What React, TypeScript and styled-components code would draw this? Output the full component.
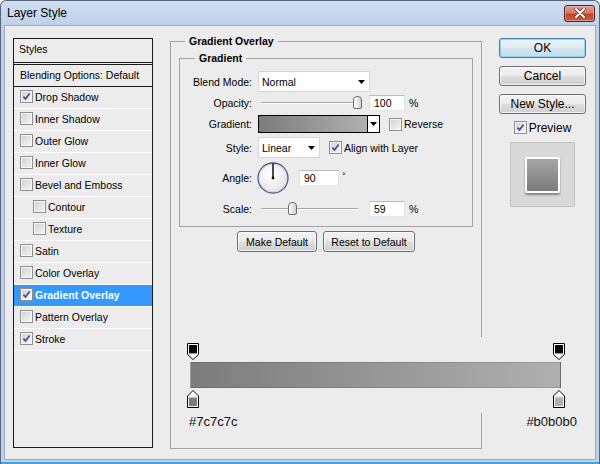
import React from "react";
import styled, { createGlobalStyle } from "styled-components";

const SANS = `"Liberation Sans", Arial, sans-serif`;

const Global = createGlobalStyle`
  html, body { margin: 0; padding: 0; }
  body {
    width: 600px; height: 464px; overflow: hidden; background: #fff;
    font-family: ${SANS}; font-size: 10.5px; color: #000;
  }
  *, *::before, *::after { box-sizing: border-box; }
`;

const Window = styled.div`
  width: 600px;
  height: 464px;
  display: flex;
  flex-direction: column;
  border: 1px solid #56657a;
  border-bottom: none;
  border-radius: 6px 6px 0 0;
  background: linear-gradient(180deg, #cfdef0 0px, #bdd2ea 24px, #bcd1e9 100%);
  padding: 0 3px 4px;
  box-shadow: inset 0 -2px 0 #3fa6dd;
  overflow: hidden;
`;

const TitleBar = styled.div`
  height: 24px;
  flex: none;
  display: flex;
  align-items: center;
  justify-content: space-between;
  padding: 0 1px 0 3px;
`;

const Title = styled.span`
  font-size: 12px;
  color: #000;
`;

const CloseButton = styled.div`
  width: 31px;
  height: 17px;
  border: 1px solid #5c2219;
  border-radius: 3px;
  background: linear-gradient(180deg, #e09a8c 0%, #d47a68 45%, #c0442c 55%, #c65f45 100%);
  box-shadow: inset 0 0 0 1px rgba(255, 210, 200, 0.45);
  display: flex;
  align-items: center;
  justify-content: center;
`;

const Body = styled.div`
  flex: 1;
  display: flex;
  align-items: flex-start;
  background: #ececec;
  border: 1px solid #98abc3;
  padding: 12px 8px 0 8px;
`;

/* ---------- left styles list ---------- */

const StylesPanel = styled.div`
  width: 140px;
  height: 410px;
  flex: none;
  border: 1px solid #1b1b1b;
  overflow: hidden;
`;

const HeaderRow = styled.div`
  height: 24px;
  border-bottom: 1px solid #1b1b1b;
  display: flex;
  align-items: center;
  padding: 0 0 3px 5px;
`;

const BlendingRow = styled.div`
  height: 23px;
  margin-top: 1px;
  border-top: 1px solid #1b1b1b;
  border-bottom: 1px solid #1b1b1b;
  display: flex;
  align-items: center;
  padding: 0 0 2px 6px;
`;

const StyleRow = styled.div<{ $indent?: boolean; $selected?: boolean }>`
  height: 22px;
  border-bottom: 1px solid #ffffff;
  display: flex;
  align-items: center;
  gap: 2px;
  padding: 0 0 2px ${(p) => (p.$indent ? 19 : 6)}px;
  background: ${(p) => (p.$selected ? "#3399ff" : "transparent")};
  color: ${(p) => (p.$selected ? "#fff" : "#000")};
  font-weight: ${(p) => (p.$selected ? "bold" : "normal")};
`;

const Box = styled.span`
  width: 13px;
  height: 13px;
  flex: none;
  border: 1px solid #8e8f8f;
  background: linear-gradient(135deg, #cfcfcf 0%, #f3f3f3 90%);
  box-shadow: inset 0 0 0 1px #f6f6f6;
  display: flex;
  align-items: center;
  justify-content: center;
`;

const CheckBox = ({ checked }: { checked?: boolean }) => (
  <Box>
    {checked && (
      <svg width="11" height="11" viewBox="0 0 11 11">
        <path d="M2.4 5.6 L4.5 8 L8.6 2.6" fill="none" stroke="#3a4f9e" strokeWidth="1.7" />
      </svg>
    )}
  </Box>
);

/* ---------- groups ---------- */

const MainGroup = styled.fieldset`
  margin: -3px 0 0 17px;
  width: 312px;
  min-inline-size: 0;
  flex: none;
  padding: 5px 8px 19px;
  border: 1px solid #a4a4a4;
`;

const InnerGroup = styled.fieldset`
  margin: 0;
  width: 294px;
  min-inline-size: 0;
  padding: 7px 0 8px;
  border: 1px solid #a4a4a4;
`;

const Legend = styled.legend<{ $offset: number }>`
  margin-left: ${(p) => p.$offset}px;
  padding: 0 4px;
  font-weight: bold;
  line-height: 12px;
  font-size: 10.5px;
`;

const FormRow = styled.div<{ $top: number; $h: number }>`
  display: flex;
  align-items: center;
  height: ${(p) => p.$h}px;
  margin-top: ${(p) => p.$top}px;
`;

const FieldLabel = styled.span`
  width: 72px;
  flex: none;
  text-align: right;
  margin-right: 6px;
`;

const Select = styled.div<{ $w: number }>`
  width: ${(p) => p.$w}px;
  height: 21px;
  flex: none;
  background: #fff;
  border: 1px solid #d6d6d6;
  display: flex;
  align-items: center;
  justify-content: space-between;
  padding: 0 4px 0 3px;
`;

const Arrow = () => (
  <svg width="7" height="4" viewBox="0 0 7 4">
    <path d="M0 0 H7 L3.5 4 Z" fill="#000" />
  </svg>
);

const NumBox = styled.div<{ $w: number }>`
  width: ${(p) => p.$w}px;
  height: 16px;
  flex: none;
  background: #fff;
  border: 1px solid;
  border-color: #b9bcc2 #dfe1e6 #e6eaee #dfe1e6;
  padding-left: 4px;
  line-height: 14px;
`;

const Unit = styled.span<{ $gap: number; $raise?: boolean }>`
  margin-left: ${(p) => p.$gap}px;
  align-self: ${(p) => (p.$raise ? "flex-start" : "center")};
  margin-top: ${(p) => (p.$raise ? 9 : 0)}px;
  font-size: ${(p) => (p.$raise ? 9 : 10.5)}px;
`;

const Slider = styled.div`
  width: 111px;
  height: 14px;
  flex: none;
  display: flex;
  align-items: center;
  padding-left: 3px;
`;

const Groove = styled.div`
  position: relative;
  width: 97px;
  height: 2px;
  border-top: 1px solid #a6a6a6;
  background: #ffffff;
`;

const Thumb = styled.div<{ $pos: number }>`
  position: absolute;
  left: calc(${(p) => p.$pos * 100}% - 5px);
  top: -7px;
  width: 9px;
  height: 13px;
  border: 1px solid #6f6f6f;
  border-radius: 4px 4px 2px 2px;
  background: linear-gradient(90deg, #fdfdfd 0%, #e4e4e4 60%, #cfcfcf 100%);
`;

const Swatch = styled.div`
  width: 122px;
  height: 18px;
  flex: none;
  border: 1px solid #000;
  display: flex;
`;

const SwatchFill = styled.div`
  flex: 1;
  background: linear-gradient(90deg, #7c7c7c, #b0b0b0);
`;

const SwatchDrop = styled.div`
  width: 12px;
  border-left: 1px solid #000;
  background: #fff;
  display: flex;
  align-items: center;
  justify-content: center;
`;

const InlineCheck = styled.label<{ $gap: number }>`
  display: flex;
  align-items: center;
  gap: 2px;
  margin-left: ${(p) => p.$gap}px;
`;

const DialWrap = styled.div`
  width: 32px;
  height: 32px;
  flex: none;
  margin-left: -1px;
  margin-right: 10px;
`;

const Dial = () => (
  <DialWrap>
    <svg width="32" height="32" viewBox="0 0 32 32">
      <defs>
        <radialGradient id="dialg" cx="0.4" cy="0.35" r="0.75">
          <stop offset="0" stopColor="#ffffff" />
          <stop offset="1" stopColor="#e2e2e2" />
        </radialGradient>
      </defs>
      <circle cx="16" cy="16" r="15" fill="url(#dialg)" stroke="#4a5a7e" strokeWidth="1.3" />
      <circle cx="16" cy="16" r="13.8" fill="none" stroke="#c9d0dd" strokeWidth="0.8" />
      <line x1="16" y1="16" x2="16" y2="1.2" stroke="#000" strokeWidth="1.4" />
      <rect x="14.8" y="14.8" width="2.4" height="2.4" fill="#000" />
    </svg>
  </DialWrap>
);

const ButtonRow = styled.div`
  display: flex;
  justify-content: center;
  gap: 6px;
  margin-top: 4px;
`;

const PushButton = styled.div<{ $w: number }>`
  width: ${(p) => p.$w}px;
  height: 21px;
  border: 1px solid #707070;
  border-radius: 3px;
  background: linear-gradient(180deg, #f2f2f2 0%, #ebebeb 48%, #dddddd 52%, #cfcfcf 100%);
  box-shadow: inset 0 0 0 1px rgba(255, 255, 255, 0.7);
  display: flex;
  align-items: center;
  justify-content: center;
`;

/* ---------- gradient editor ---------- */

const Editor = styled.div`
  position: relative;
  width: 410px;
  height: 76px;
  margin: 85px 0 0 1px;
  padding-top: 6px;
  background: #ececec;
`;

const StopRow = styled.div<{ $top: number }>`
  width: 378px;
  margin: ${(p) => p.$top}px 0 0 7px;
  display: flex;
  justify-content: space-between;
`;

const Bar = styled.div`
  width: 371px;
  height: 26px;
  margin: 2px 0 0 10px;
  border: 1px solid rgba(0, 0, 0, 0.12);
  background: linear-gradient(90deg, #7c7c7c, #b0b0b0);
`;

const HexRow = styled.div`
  width: 388px;
  margin: 2px 0 0 10px;
  display: flex;
  justify-content: space-between;
  font-size: 13px;
  line-height: 14px;
  color: #111;
`;

const OpacityStop = () => (
  <svg width="12" height="17" viewBox="0 0 12 17">
    <path d="M0.5 0.5 H11.5 V11.5 L6 16.5 L0.5 11.5 Z" fill="#fff" stroke="#000" />
    <rect x="2" y="2" width="8" height="8" fill="#000" />
    <rect x="2" y="10" width="8" height="1" fill="#9a9a9a" />
  </svg>
);

const ColorStop = ({ color }: { color: string }) => (
  <svg width="12" height="18" viewBox="0 0 12 18">
    <path d="M6 0.5 L11.5 6 V17.5 H0.5 V6 Z" fill="#fff" stroke="#000" />
    <rect x="2" y="7.5" width="8" height="8.5" fill={color} />
    <rect x="2" y="6.5" width="8" height="1" fill="#d0d0d0" />
  </svg>
);

/* ---------- right column ---------- */

const RightColumn = styled.div`
  width: 87px;
  margin-left: 17px;
  flex: none;
  display: flex;
  flex-direction: column;
  align-items: center;
`;

const DialogButton = styled.div<{ $primary?: boolean; $top: number }>`
  width: 87px;
  height: 20px;
  margin-top: ${(p) => p.$top}px;
  border: 1px solid ${(p) => (p.$primary ? "#3c7fb1" : "#707070")};
  border-radius: 3px;
  background: ${(p) =>
    p.$primary
      ? "linear-gradient(180deg, #edf4fa 0%, #e0ecf5 48%, #d3e4f0 52%, #c7dcea 100%)"
      : "linear-gradient(180deg, #f2f2f2 0%, #ebebeb 48%, #dddddd 52%, #cfcfcf 100%)"};
  box-shadow: inset 0 0 0 1px
    ${(p) => (p.$primary ? "rgba(120, 210, 245, 0.8)" : "rgba(255, 255, 255, 0.7)")};
  font-size: 12px;
  display: flex;
  align-items: center;
  justify-content: center;
`;

const PreviewRow = styled.label`
  margin-top: 7px;
  height: 13px;
  display: flex;
  align-items: center;
  gap: 2px;
  font-size: 12px;
`;

const PreviewBox = styled.div`
  margin-top: 8px;
  width: 65px;
  height: 65px;
  background: #d9d9d9;
  border: 1px solid #c3c3c3;
  display: flex;
  align-items: center;
  justify-content: center;
`;

const PreviewSquare = styled.div`
  width: 35px;
  height: 36px;
  margin-top: 1px;
  border: 2px solid #fff;
  border-radius: 2px;
  background: linear-gradient(180deg, #a6a6a6 0%, #7b7b7b 100%);
  box-shadow: 0 2px 2px rgba(0, 0, 0, 0.4);
`;

const styleItems: { label: string; checked?: boolean; indent?: boolean; selected?: boolean }[] = [
  { label: "Drop Shadow", checked: true },
  { label: "Inner Shadow" },
  { label: "Outer Glow" },
  { label: "Inner Glow" },
  { label: "Bevel and Emboss" },
  { label: "Contour", indent: true },
  { label: "Texture", indent: true },
  { label: "Satin" },
  { label: "Color Overlay" },
  { label: "Gradient Overlay", checked: true, selected: true },
  { label: "Pattern Overlay" },
  { label: "Stroke", checked: true },
];

export default function App() {
  return (
    <>
      <Global />
      <Window>
        <TitleBar>
          <Title>Layer Style</Title>
          <CloseButton>
            <svg width="12" height="10" viewBox="0 0 12 10">
              <path d="M2 1 L10 9 M10 1 L2 9" stroke="#5a2a22" strokeWidth="3.4" strokeLinecap="round" />
              <path d="M2 1 L10 9 M10 1 L2 9" stroke="#fff" strokeWidth="2" strokeLinecap="round" />
            </svg>
          </CloseButton>
        </TitleBar>
        <Body>
          <StylesPanel>
            <HeaderRow>Styles</HeaderRow>
            <BlendingRow>Blending Options: Default</BlendingRow>
            {styleItems.map((it) => (
              <StyleRow key={it.label} $indent={it.indent} $selected={it.selected}>
                <CheckBox checked={it.checked} />
                <span>{it.label}</span>
              </StyleRow>
            ))}
          </StylesPanel>

          <MainGroup>
            <Legend $offset={6}>Gradient Overlay</Legend>
            <InnerGroup>
              <Legend $offset={15}>Gradient</Legend>
              <FormRow $top={0} $h={21}>
                <FieldLabel>Blend Mode:</FieldLabel>
                <Select $w={112}>
                  <span>Normal</span>
                  <Arrow />
                </Select>
              </FormRow>
              <FormRow $top={2} $h={17}>
                <FieldLabel>Opacity:</FieldLabel>
                <Slider>
                  <Groove>
                    <Thumb $pos={1} />
                  </Groove>
                </Slider>
                <NumBox $w={36}>100</NumBox>
                <Unit $gap={4}>%</Unit>
              </FormRow>
              <FormRow $top={4} $h={18}>
                <FieldLabel>Gradient:</FieldLabel>
                <Swatch>
                  <SwatchFill />
                  <SwatchDrop>
                    <Arrow />
                  </SwatchDrop>
                </Swatch>
                <InlineCheck $gap={9}>
                  <CheckBox />
                  <span>Reverse</span>
                </InlineCheck>
              </FormRow>
              <FormRow $top={4} $h={21}>
                <FieldLabel>Style:</FieldLabel>
                <Select $w={62}>
                  <span>Linear</span>
                  <Arrow />
                </Select>
                <InlineCheck $gap={9}>
                  <CheckBox checked />
                  <span>Align with Layer</span>
                </InlineCheck>
              </FormRow>
              <FormRow $top={4} $h={31}>
                <FieldLabel>Angle:</FieldLabel>
                <Dial />
                <NumBox $w={40}>90</NumBox>
                <Unit $gap={3} $raise>
                  °
                </Unit>
              </FormRow>
              <FormRow $top={7} $h={18}>
                <FieldLabel>Scale:</FieldLabel>
                <Slider>
                  <Groove>
                    <Thumb $pos={0.325} />
                  </Groove>
                </Slider>
                <NumBox $w={36}>59</NumBox>
                <Unit $gap={4}>%</Unit>
              </FormRow>
            </InnerGroup>

            <ButtonRow>
              <PushButton $w={80}>Make Default</PushButton>
              <PushButton $w={92}>Reset to Default</PushButton>
            </ButtonRow>

            <Editor>
              <StopRow $top={0}>
                <OpacityStop />
                <OpacityStop />
              </StopRow>
              <Bar />
              <StopRow $top={2}>
                <ColorStop color="#7c7c7c" />
                <ColorStop color="#b0b0b0" />
              </StopRow>
            </Editor>
            <HexRow>
              <span>#7c7c7c</span>
              <span>#b0b0b0</span>
            </HexRow>
          </MainGroup>

          <RightColumn>
            <DialogButton $primary $top={0}>
              OK
            </DialogButton>
            <DialogButton $top={8}>Cancel</DialogButton>
            <DialogButton $top={8}>New Style...</DialogButton>
            <PreviewRow>
              <CheckBox checked />
              <span>Preview</span>
            </PreviewRow>
            <PreviewBox>
              <PreviewSquare />
            </PreviewBox>
          </RightColumn>
        </Body>
      </Window>
    </>
  );
}
